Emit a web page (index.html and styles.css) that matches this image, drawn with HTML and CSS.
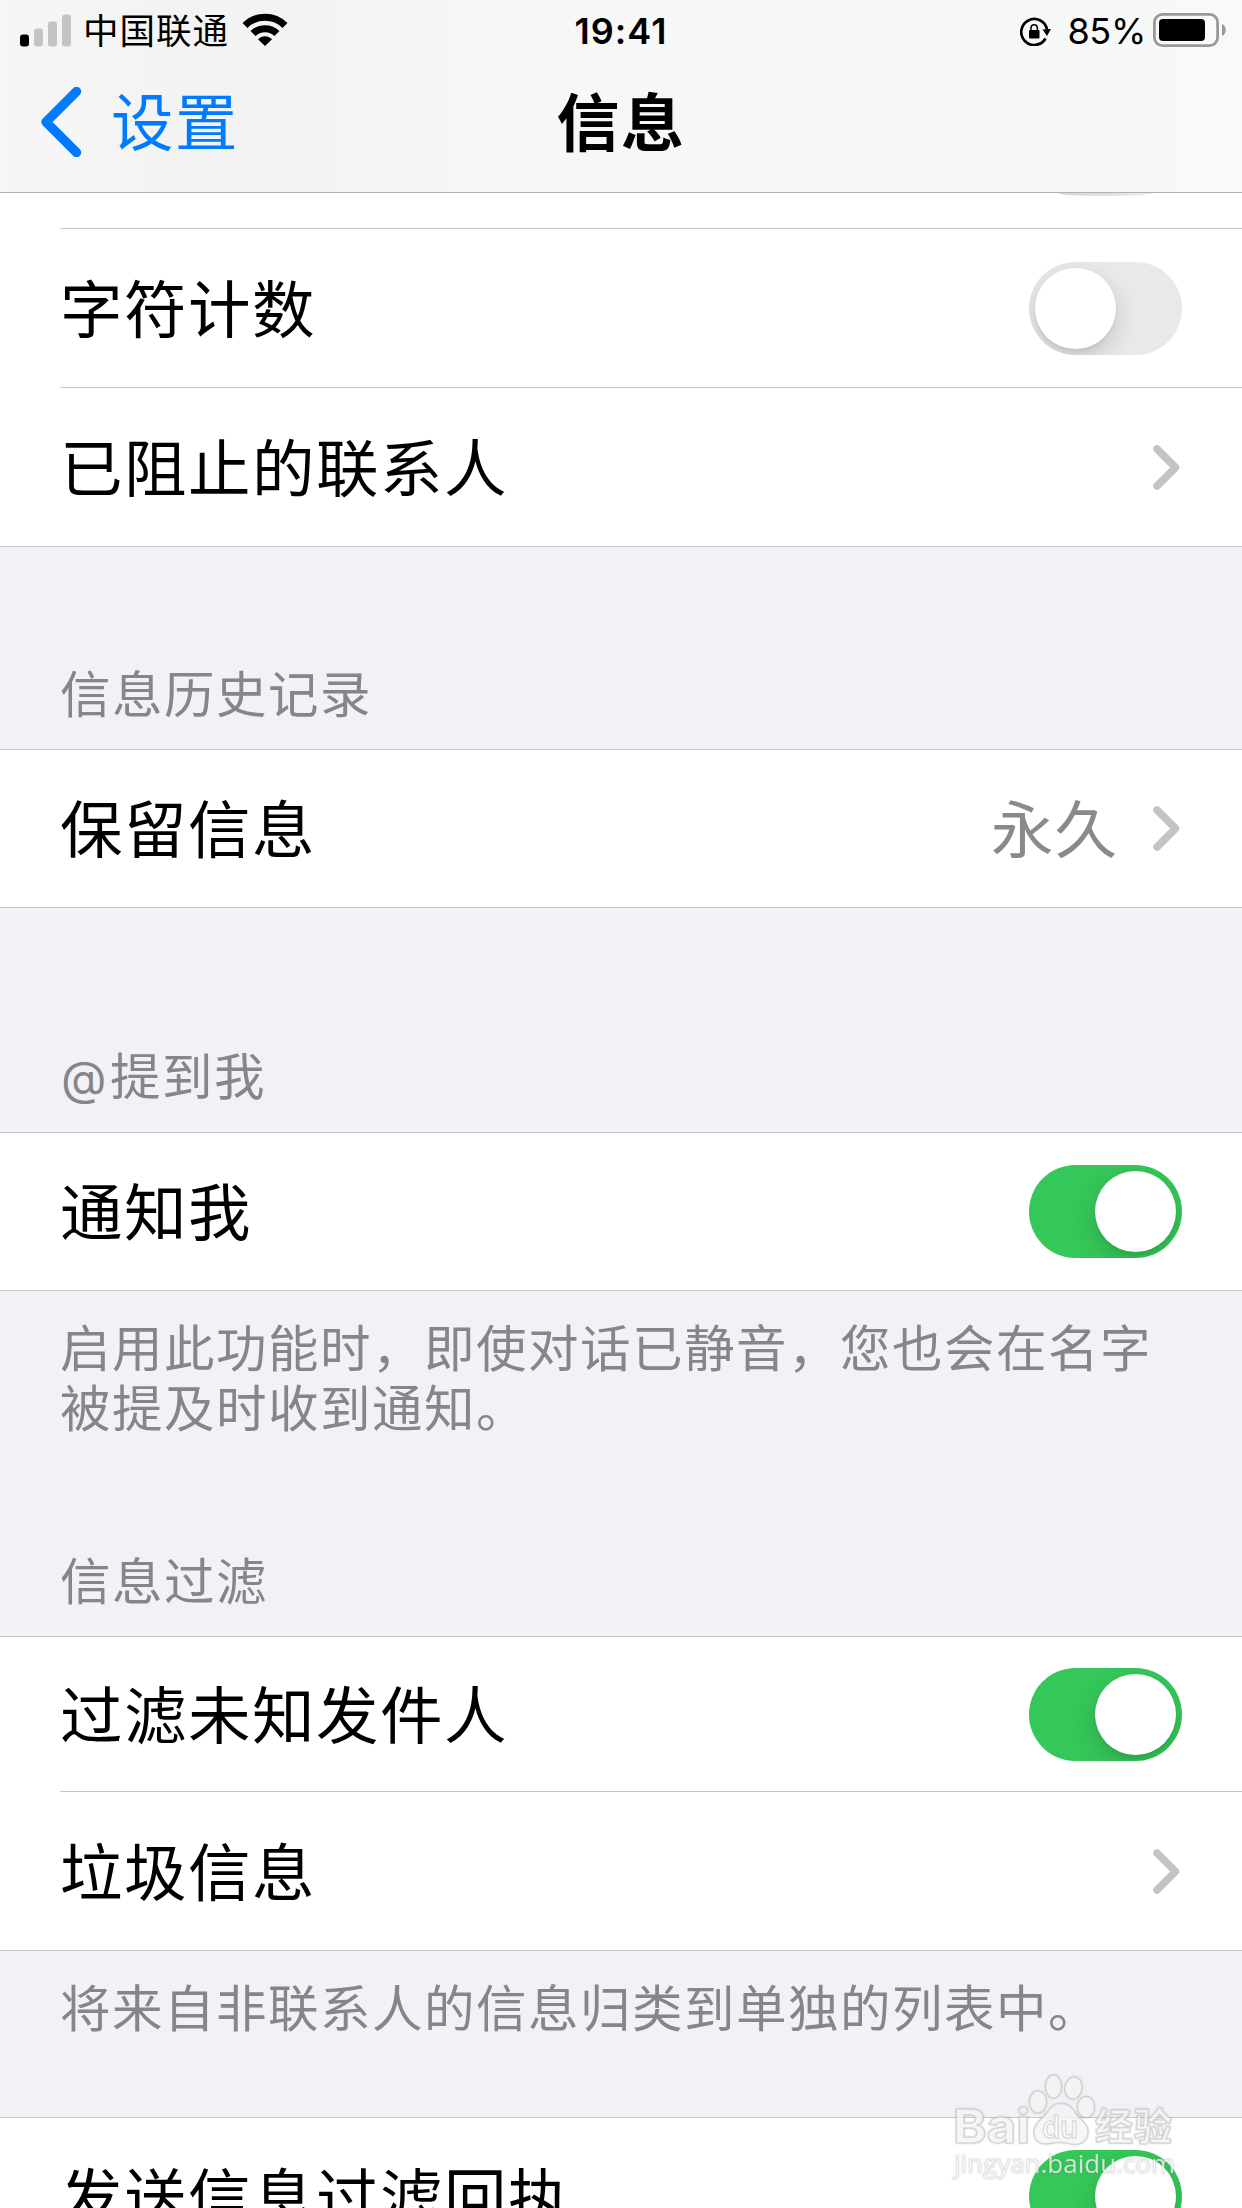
FILE: index.html
```html
<!DOCTYPE html>
<html lang="zh-CN">
<head>
<meta charset="utf-8">
<title>信息</title>
<link rel="stylesheet" href="styles.css">
</head>
<body>
<div class="screen">
  <header class="top">
    <div class="status">
      <div class="status-left">
        <svg class="signal" width="52" height="33" viewBox="0 0 52 33"><rect x="0" y="20.500" width="9" height="12" rx="3"/><g fill="#c4c4c4"><rect x="14" y="14.500" width="9" height="18" rx="3"/><rect x="28" y="7.500" width="9" height="25" rx="3"/><rect x="42" y="0.500" width="9" height="32" rx="3"/></g></svg>
        <span class="carrier">中国联通</span>
        <svg class="wifi" width="46" height="34" viewBox="0 0 46 34"><g fill="none" stroke="#000" stroke-width="7"><path d="M3 12.500C14 1.500 32 1.500 43 12.500"/><path d="M11 20.500C17.500 14 28.500 14 35 20.500"/></g><path d="M23 33L16 26.300C20 22.300 26 22.300 30 26.300Z"/></svg>
      </div>
      <span class="clock">19:41</span>
      <div class="status-right">
        <svg class="lock" width="32" height="29" viewBox="0 0 32 29"><path d="M25.500 21.500A13 13 0 1 1 27 12.500" fill="none" stroke="#000" stroke-width="2.700"/><path d="M22.500 12.500L31 12L27 19Z"/><rect x="9" y="13" width="10.500" height="8.500" rx="1"/><path d="M11 14V11a3.200 3.200 0 0 1 6.400 0V14" fill="none" stroke="#000" stroke-width="1.500"/></svg>
        <span class="percent">85%</span>
        <svg class="battery" width="74" height="34" viewBox="0 0 74 34"><rect x="1.400" y="1.400" width="63.200" height="31.200" rx="8" fill="none" stroke="#979a98" stroke-width="2.800"/><rect x="6" y="6" width="46" height="22" rx="4"/><path d="M69 11c5 2 5 10 0 12Z" fill="#979a98"/></svg>
      </div>
    </div>
    <nav class="nav">
      <a class="back"><svg width="42" height="70" viewBox="0 0 42 70"><path d="M36.500 4.500L6 35L36.500 65.500" fill="none" stroke="#007aff" stroke-width="9.500" stroke-linecap="round" stroke-linejoin="round"/></svg><span>设置</span></a>
      <h1 class="title">信息</h1>
    </nav>
  </header>
  <main class="list">
    <section class="group group-first">
      <div class="row-clipped"><span class="toggle-edge"></span></div>
      <div class="row divided"><span class="label">字符计数</span><span class="toggle"></span></div>
      <div class="row divided"><span class="label">已阻止的联系人</span><svg class="chevron" width="27" height="45" viewBox="0 0 27 45"><path d="M4 4L22.500 22.500L4 41"/></svg></div>
    </section>
    <h2 class="heading h-history">信息历史记录</h2>
    <section class="group">
      <div class="row"><span class="label">保留信息</span><span class="value">永久</span><svg class="chevron" width="27" height="45" viewBox="0 0 27 45"><path d="M4 4L22.500 22.500L4 41"/></svg></div>
    </section>
    <h2 class="heading h-mention"><span class="at">@</span>提到我</h2>
    <section class="group">
      <div class="row"><span class="label">通知我</span><span class="toggle on"></span></div>
    </section>
    <p class="note note-mention">启用此功能时，即使对话已静音，您也会在名字<br>被提及时收到通知。</p>
    <h2 class="heading h-filter">信息过滤</h2>
    <section class="group">
      <div class="row row-short"><span class="label">过滤未知发件人</span><span class="toggle on"></span></div>
      <div class="row divided"><span class="label">垃圾信息</span><svg class="chevron" width="27" height="45" viewBox="0 0 27 45"><path d="M4 4L22.500 22.500L4 41"/></svg></div>
    </section>
    <p class="note note-filter">将来自非联系人的信息归类到单独的列表中。</p>
    <section class="group">
      <div class="row"><span class="label">发送信息过滤回执</span><span class="toggle on"></span></div>
    </section>
  </main>
  <div class="watermark">
    <svg width="232" height="114" viewBox="0 0 232 114">
      <g class="mark">
        <ellipse cx="85" cy="37" rx="8.500" ry="11"/>
        <ellipse cx="100.500" cy="21.500" rx="8" ry="11.500"/>
        <ellipse cx="120.500" cy="23" rx="8.500" ry="11" transform="rotate(10 120.500 23)"/>
        <ellipse cx="133" cy="42" rx="8.500" ry="10.500"/>
        <path d="M108 38.500C100 38.500 97 44 92 50C86 56 80 61 81 69C82 79 91 80 99 78Q108 76 118 79C127 81 135 76 135 67C135 59 128 55 123 49C119 43 116 38.500 108 38.500Z"/>
        <text class="brand" x="0" y="78" textLength="77" lengthAdjust="spacingAndGlyphs">Bai</text>
        <text class="du" x="89" y="73" textLength="36" lengthAdjust="spacingAndGlyphs">du</text>
        <text class="jy" x="142" y="75" textLength="77">经验</text>
        <text class="site" x="1" y="108" textLength="221" lengthAdjust="spacingAndGlyphs">jingyan.baidu.com</text>
      </g>
    </svg>
  </div>
</div>
</body>
</html>
```
FILE: styles.css
```css
* { box-sizing: border-box; }
body { margin: 0; background: #f2f1f6; }
.screen {
  position: relative;
  width: 1242px;
  height: 2208px;
  overflow: hidden;
  background: #f2f1f6;
  color: #000;
  font-family: Inter, "Noto Sans CJK SC", sans-serif;
}
.top {
  height: 193px;
  background: linear-gradient(90deg, #f6f6f6 0, #f3f3f3 15%, #f3f3f3 25%, #f7f7f7 40%, #f7f7f7 78%, #f6f9f7 88%, #f8f9f8 100%);
  border-bottom: 1px solid #b2b2b2;
}
.status {
  display: grid;
  grid-template-columns: 1fr auto 1fr;
  align-items: center;
  height: 62px;
}
.status-left { display: flex; align-items: center; padding-left: 20px; }
.signal { margin-top: -1px; }
.carrier { margin-left: 11px; font-size: 35.500px; letter-spacing: 1px; line-height: 60px; padding-top: 2px; }
.wifi { margin-left: 13px; margin-top: -3px; }
.clock { font-size: 36px; font-weight: 600; letter-spacing: 1px; line-height: 62px; }
.status-right { display: flex; align-items: center; justify-content: flex-end; padding-right: 15px; }
.percent { margin: 0 7px 0 15px; font-size: 36px; letter-spacing: -0.300px; line-height: 62px; }
.battery { margin-top: -2px; }
.nav {
  display: grid;
  grid-template-columns: 1fr auto 1fr;
  align-items: center;
  height: 120px;
}
.back {
  display: flex;
  align-items: center;
  gap: 29px;
  padding-left: 40px;
  color: #007aff;
  font-size: 62.500px;
  letter-spacing: 1.500px;
  line-height: 88px;
}
.back span { padding-top: 2px; }
.title { margin: 0; padding-top: 2px; font-size: 63px; font-weight: 700; letter-spacing: 1.500px; line-height: 88px; }
.group { background: #fff; border-top: 1px solid #c7c7c9; border-bottom: 1px solid #c7c7c9; }
.group-first { border-top: 0; }
.row-clipped { height: 35px; padding-left: 1058px; overflow: hidden; }
.toggle-edge { display: block; width: 95px; height: 3px; border-radius: 0 0 48px 48px / 0 0 3px 3px; background: linear-gradient(90deg, #d4d4d4, #ececee); }
.row {
  display: flex;
  align-items: center;
  height: 157px;
  padding: 0 60px;
}
.row.divided { height: 159px; padding-top: 1px; background: linear-gradient(#c7c7c9, #c7c7c9) 60px 0 / 1182px 1px no-repeat; }
.row-short { height: 154px; }
.label { flex: 1; padding-top: 3px; font-size: 62.500px; letter-spacing: 1.500px; line-height: 88px; white-space: nowrap; }
.value { margin-right: 35px; padding-top: 2px; color: #8a8a8e; font-size: 62.500px; letter-spacing: 1px; line-height: 88px; }
.chevron { margin-right: 2px; fill: none; stroke: #c4c4c6; stroke-width: 7.500px; stroke-linecap: round; stroke-linejoin: round; }
.toggle {
  display: flex;
  width: 153px;
  height: 93px;
  padding: 6px;
  border-radius: 47px;
  background: #e9e9eb;
  overflow: hidden;
}
.toggle::before { content: ""; width: 81px; height: 81px; border-radius: 50%; background: #fff; box-shadow: 0 9px 24px rgba(0, 0, 0, .16), 0 3px 3px rgba(0, 0, 0, .05); }
.toggle.on { justify-content: flex-end; background: #35c759; }
.heading, .note {
  margin: 0;
  padding: 0 60px;
  color: #85858a;
  font-size: 50.500px;
  font-weight: 400;
  letter-spacing: 1.500px;
  line-height: 60px;
  white-space: nowrap;
}
.at { margin: 0 2px 0 1px; font-size: 47px; }
.h-history { height: 202px; padding-top: 118px; }
.h-mention { height: 224px; padding-top: 139px; }
.note-mention { height: 245px; padding-top: 28px; }
.h-filter { height: 100px; padding-top: 16px; }
.note-filter { height: 166px; padding-top: 28px; }
.watermark { position: absolute; left: 953px; top: 2065px; }
.watermark svg { display: block; overflow: visible; filter: drop-shadow(0 0 1px rgba(0, 0, 0, .2)); }
.mark { fill: rgba(255, 255, 255, .75); stroke: rgba(190, 190, 195, .5); stroke-width: 1.500px; }
.brand, .du { font-family: Inter, sans-serif; font-weight: 700; }
.brand { font-size: 47px; }
.du { font-size: 31px; font-weight: 500; }
.jy { font-family: "Noto Sans CJK SC", sans-serif; font-size: 38px; font-weight: 700; }
.site { font-family: "Open Sans", sans-serif; font-size: 26px; stroke-width: .5px; }
```
